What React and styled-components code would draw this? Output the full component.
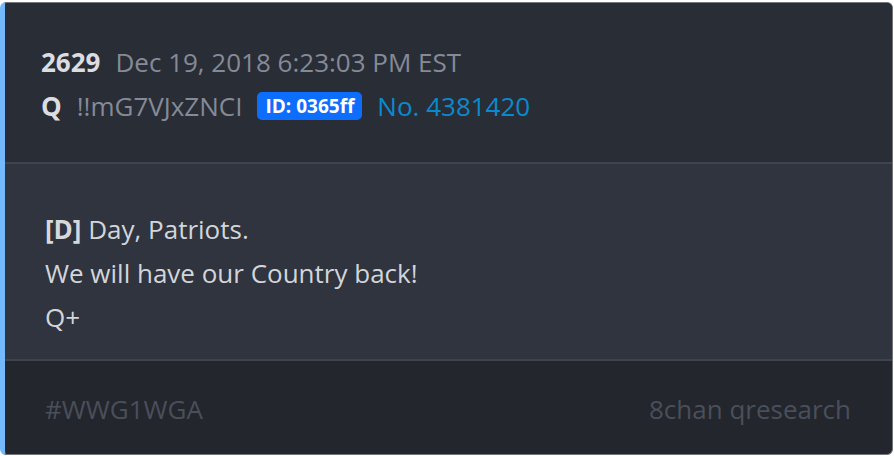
import styled, { createGlobalStyle } from "styled-components";

const GlobalStyle = createGlobalStyle`
  html, body {
    margin: 0;
    padding: 0;
    background: #ffffff;
  }
  body {
    font-family: "Open Sans", "Noto Sans", sans-serif;
  }
`;

const Page = styled.div`
  padding-top: 2px;
  width: 894px;
  height: 456px;
  box-sizing: border-box;
`;

const Card = styled.article`
  width: 893px;
  height: 453px;
  box-sizing: border-box;
  display: flex;
  flex-direction: column;
  border: 1px solid #70757f;
  border-left: 5px solid #74b8ff;
  border-radius: 6px;
  overflow: hidden;
  background: #23262d;
`;

const Header = styled.header`
  background: #292d36;
  padding: 37px 36px 0;
  height: 161px;
  flex-shrink: 0;
  box-sizing: border-box;
  border-bottom: 2px solid #3e434e;
`;

const Line = styled.div`
  display: flex;
  align-items: center;
  gap: 15px;
  height: 44px;
  font-size: 26px;
`;

const Strong = styled.span`
  font-weight: 700;
  color: #dcdde0;
`;

const Muted = styled.span`
  color: #858a96;
`;

const Badge = styled.span`
  background: #0d6efd;
  color: #ffffff;
  font-weight: 700;
  font-size: 19px;
  line-height: 28px;
  padding: 0 8px;
  border-radius: 5px;
`;

const PostNo = styled.span`
  color: #0a8ace;
`;

const Body = styled.section`
  background: #2f343e;
  height: 197px;
  flex-shrink: 0;
  box-sizing: border-box;
  padding: 43px 40px 0;
  border-bottom: 2px solid #3e434e;
  color: #d3d5da;
  font-size: 26px;
  line-height: 44px;

  p {
    margin: 0;
  }

  b {
    color: #d6d8dc;
  }
`;

const Footer = styled.footer`
  flex: 1;
  display: flex;
  align-items: center;
  justify-content: space-between;
  padding: 2px 41px 0 40px;
  font-size: 26px;
  color: #4a4f5a;
`;

export default function App() {
  return (
    <>
      <GlobalStyle />
      <Page>
        <Card>
          <Header>
            <Line>
              <Strong>2629</Strong>
              <Muted>Dec 19, 2018 6:23:03 PM EST</Muted>
            </Line>
            <Line>
              <Strong>Q</Strong>
              <Muted>!!mG7VJxZNCI</Muted>
              <Badge>ID: 0365ff</Badge>
              <PostNo>No. 4381420</PostNo>
            </Line>
          </Header>
          <Body>
            <p>
              <b>[D]</b> Day, Patriots.
            </p>
            <p>We will have our Country back!</p>
            <p>Q+</p>
          </Body>
          <Footer>
            <span>#WWG1WGA</span>
            <span>8chan qresearch</span>
          </Footer>
        </Card>
      </Page>
    </>
  );
}
